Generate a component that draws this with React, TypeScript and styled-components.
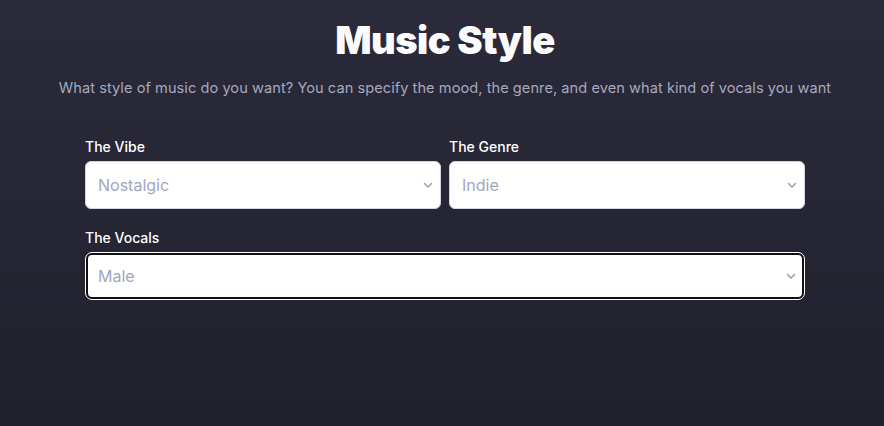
import React from "react";
import styled, { createGlobalStyle } from "styled-components";

const Global = createGlobalStyle`
  html, body { margin: 0; padding: 0; }
  body {
    background: linear-gradient(180deg, #2a2a3b 0%, #21212d 100%);
    min-height: 426px;
    font-family: "Poppins", "Inter", "Noto Sans", sans-serif;
  }
`;

const Page = styled.main`
  width: 884px;
  height: 426px;
  box-sizing: border-box;
  padding: 18px 0 0 6px;
  display: flex;
  flex-direction: column;
  align-items: center;
`;

const Title = styled.h1`
  margin: 0;
  color: #fbfbfe;
  font-family: "Inter", sans-serif;
  font-weight: 900;
  font-size: 38px;
  line-height: 44px;
  letter-spacing: -0.5px;
`;

const Subtitle = styled.p`
  margin: 16px 0 0;
  color: #a6a9bd;
  font-family: "Inter", sans-serif;
  font-size: 14.6px;
  letter-spacing: 0.05px;
  line-height: 20px;
  white-space: nowrap;
`;

const Form = styled.div`
  margin-top: 40px;
  width: 720px;
  display: grid;
  grid-template-columns: 1fr 1fr;
  column-gap: 8px;
  row-gap: 20px;
`;

const Group = styled.div<{ $wide?: boolean }>`
  display: flex;
  flex-direction: column;
  gap: 5px;
  grid-column: ${(p) => (p.$wide ? "1 / span 2" : "auto")};
`;

const Label = styled.span`
  color: #ffffff;
  font-family: "Inter", sans-serif;
  font-size: 14px;
  font-weight: 500;
  line-height: 18px;
`;

const Field = styled.div<{ $focused?: boolean }>`
  box-sizing: border-box;
  height: ${(p) => (p.$focused ? "46px" : "48px")};
  margin: ${(p) => (p.$focused ? "1px" : "0")};
  background: #ffffff;
  border-radius: 6px;
  border: ${(p) => (p.$focused ? "2px solid #111113" : "1px solid #d4d6de")};
  outline: ${(p) => (p.$focused ? "1px solid #ffffff" : "none")};
  display: flex;
  align-items: center;
  justify-content: space-between;
  padding: ${(p) => (p.$focused ? "0 3px 0 10px" : "0 4px 0 12px")};
`;

const Value = styled.span`
  color: #a2a6bd;
  font-family: "Inter", sans-serif;
  font-size: 16px;
  line-height: 20px;
`;

const Chevron = () => (
  <svg width="16" height="16" viewBox="0 0 16 16" fill="none">
    <path d="M4.5 6.5 L8 10 L11.5 6.5" stroke="#9b9fb5" strokeWidth="1.6" strokeLinecap="round" strokeLinejoin="round" />
  </svg>
);

const Select = ({ value, focused }: { value: string; focused?: boolean }) => (
  <Field $focused={focused}>
    <Value>{value}</Value>
    <Chevron />
  </Field>
);

export default function App() {
  return (
    <>
      <Global />
      <Page>
        <Title>Music Style</Title>
        <Subtitle>
          What style of music do you want? You can specify the mood, the genre, and even what kind of vocals you want
        </Subtitle>
        <Form>
          <Group>
            <Label>The Vibe</Label>
            <Select value="Nostalgic" />
          </Group>
          <Group>
            <Label>The Genre</Label>
            <Select value="Indie" />
          </Group>
          <Group $wide>
            <Label>The Vocals</Label>
            <Select value="Male" focused />
          </Group>
        </Form>
      </Page>
    </>
  );
}
